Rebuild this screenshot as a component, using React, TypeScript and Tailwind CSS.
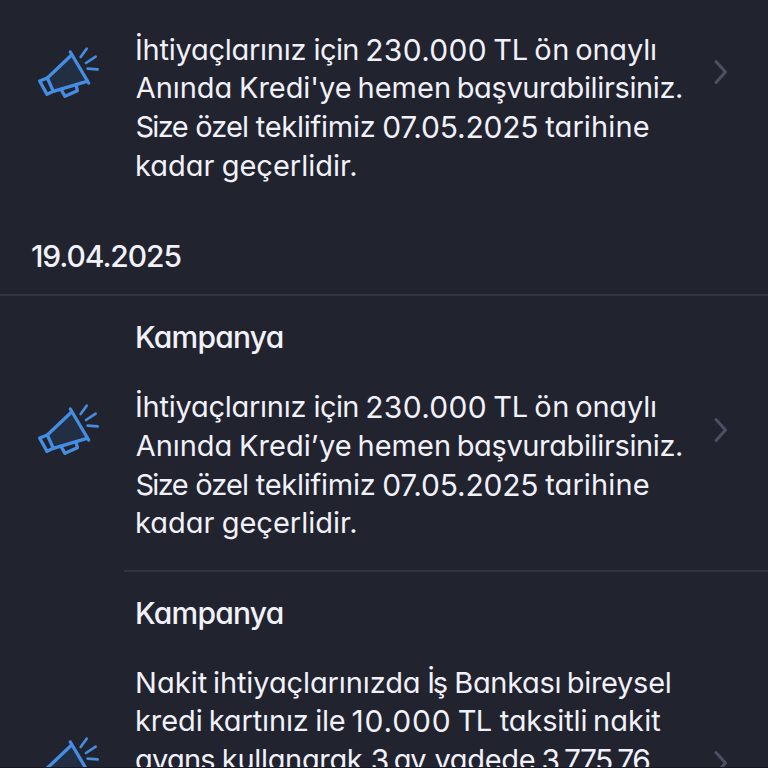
import { useLayoutEffect, useRef, useState } from "react";
import type { ReactNode } from "react";

// A word with the x of its left and right ink edges on the page.
type Word = [text: string, left: number, right: number];

const TEXT_LEFT = 135;

const leftBearing = (text: string) =>
  /^[İhKkbBNni]/.test(text) ? 2.5 : /^[AvTty]/.test(text) ? 0.8 : 1.8;
const rightBearing = (text: string) =>
  /[ınlim.]$/.test(text) ? 1.3 : /[zkrtyL'’]$/.test(text) ? 0 : 0.8;

function FittedWord({ word: [text, left, right], advance }: { word: Word; advance?: number }) {
  const ref = useRef<HTMLSpanElement>(null);
  const [spacing, setSpacing] = useState(0);

  useLayoutEffect(() => {
    const el = ref.current;
    if (!el || text.length < 2) return;
    el.style.letterSpacing = "0px";
    const natural = el.getBoundingClientRect().width;
    const target = right - left + leftBearing(text) + rightBearing(text);
    const next = (target - natural) / (text.length - 1);
    el.style.letterSpacing = `${next}px`;
    setSpacing(next);
  }, [text, left, right]);

  const size = /^\d/.test(text) ? "text-[30px] leading-[38.7px]" : "";
  return (
    <span className="block h-[38.7px] shrink-0 whitespace-pre" style={{ width: advance }}>
      <span ref={ref} className={`inline ${size}`} style={{ letterSpacing: `${spacing}px` }}>{text}</span>{" "}
    </span>
  );
}

function Line({ words }: { words: Word[] }) {
  const origin = (w: Word) => w[1] - leftBearing(w[0]);
  return (
    <span className="flex" style={{ paddingLeft: Math.max(0, origin(words[0]) - TEXT_LEFT + 0.5) }}>
      {words.map((w, i) => (
        <FittedWord key={i} word={w} advance={words[i + 1] ? origin(words[i + 1]) - origin(w) : undefined} />
      ))}
    </span>
  );
}

const offer = (name: string): Word[][] => [
  [["İhtiyaçlarınız", 137, 306], ["için", 315.5, 357.7], ["230.000", 366.5, 485.5], ["TL", 493.5, 527.7], ["ön", 535.5, 567.5], ["onaylı", 576.5, 655.3]],
  [["Anında", 136, 231], [name, 241, 350.3], ["hemen", 359.5, 449.3], ["başvurabilirsiniz.", 458.7, 681.7]],
  [["Size", 136.7, 187.3], ["özel", 196.5, 247.3], ["teklifimiz", 256, 375.3], ["07.05.2025", 383.5, 537.3], ["tarihine", 545.5, 648.3]],
  [["kadar", 137, 214], ["geçerlidir.", 223, 355.7]],
];

const cashAdvance: Word[][] = [
  [["Nakit", 137, 206.7], ["ihtiyaçlarınızda", 215, 419.3], ["İş", 429.3, 446.7], ["Bankası", 456.3, 559.7], ["bireysel", 568.7, 670]],
  [["kredi", 137, 201], ["kartınız", 210.7, 308.3], ["ile", 317.3, 344.3], ["10.000", 352.7, 449.5], ["TL", 458, 491.7], ["taksitli", 500, 585.7], ["nakit", 595, 660.3]],
  [["avans", 136.3, 214.3], ["kullanarak", 223.8, 362.3], ["3", 372, 386], ["ay", 395, 426], ["vadede", 434.7, 534.3], ["3.775,76", 542.7, 649.5]],
];

function Megaphone() {
  return (
    <svg className="h-[90px] w-[100px]" viewBox="0 0 300 270" fill="none" stroke="#458de2" strokeWidth="10" strokeLinecap="round" strokeLinejoin="round">
      <path d="M82 144 155 76 200 154 98 183Z" fill="#222e42" stroke="none" />
      <path d="M151 66 206 159" />
      <path d="M154 76 82 144M201 154 100 184" />
      <path d="M59 153 82 144 100 184 81 193Z" />
      <path d="M123 178 135 199 172 182 168 164" />
      <path d="M182 81 200 56M198 99 227 80M203 116 233 118" strokeWidth="8" />
    </svg>
  );
}

function Chevron() {
  return (
    <svg className="h-[30px] w-[20px]" viewBox="0 0 20 30" fill="none" stroke="#4c5064" strokeWidth="3" strokeLinecap="round">
      <path d="M6 4.5 15.5 15 6 25.5" strokeLinejoin="round" />
    </svg>
  );
}

function Notification({ title, iconTop, chevronTop, children }: { title?: string; iconTop: string; chevronTop: string; children: ReactNode }) {
  return (
    <div className="flex items-start">
      <div className={`ml-5 w-[115px] shrink-0 ${iconTop}`}><Megaphone /></div>
      <div className="w-[575px] shrink-0">
        {title && (
          <h2 className="mt-[22px] mb-[31px] w-fit text-[30px] font-medium tracking-[-0.75px]">{title}</h2>
        )}
        <div>{children}</div>
      </div>
      <div className={chevronTop}><Chevron /></div>
    </div>
  );
}

export default function App() {
  return (
    <main className="h-[768px] w-[768px] overflow-hidden border-b border-[#181823] bg-[#21232e] font-['Inter','Noto_Sans',sans-serif] text-[29px] leading-[38.7px] text-[#f1f1fa] [font-feature-settings:'cv11']">
      <div className="h-[208px] pt-[30.6px]">
        <Notification iconTop="mt-[-0.6px]" chevronTop="mt-[26.4px]">
          {offer("Kredi'ye").map((words, i) => <Line key={i} words={words} />)}
        </Notification>
      </div>
      <div className="h-[88px] border-b-2 border-[#333642] pt-[29px] pl-[31px]">
        <h1 className="w-fit text-[30px] font-medium tracking-[-1.1px]">19.04.2025</h1>
      </div>
      <div className="h-[274px]">
        <Notification title="Kampanya" iconTop="mt-[91px]" chevronTop="mt-[119px]">
          <div className="pt-[0.6px]">
            {offer("Kredi’ye").map((words, i) => <Line key={i} words={words} />)}
          </div>
        </Notification>
      </div>
      <div className="ml-[124px] h-0.5 bg-[#303340]" />
      <Notification title="Kampanya" iconTop="mt-[148px]" chevronTop="mt-[176px]">
        {cashAdvance.map((words, i) => <Line key={i} words={words} />)}
      </Notification>
    </main>
  );
}
